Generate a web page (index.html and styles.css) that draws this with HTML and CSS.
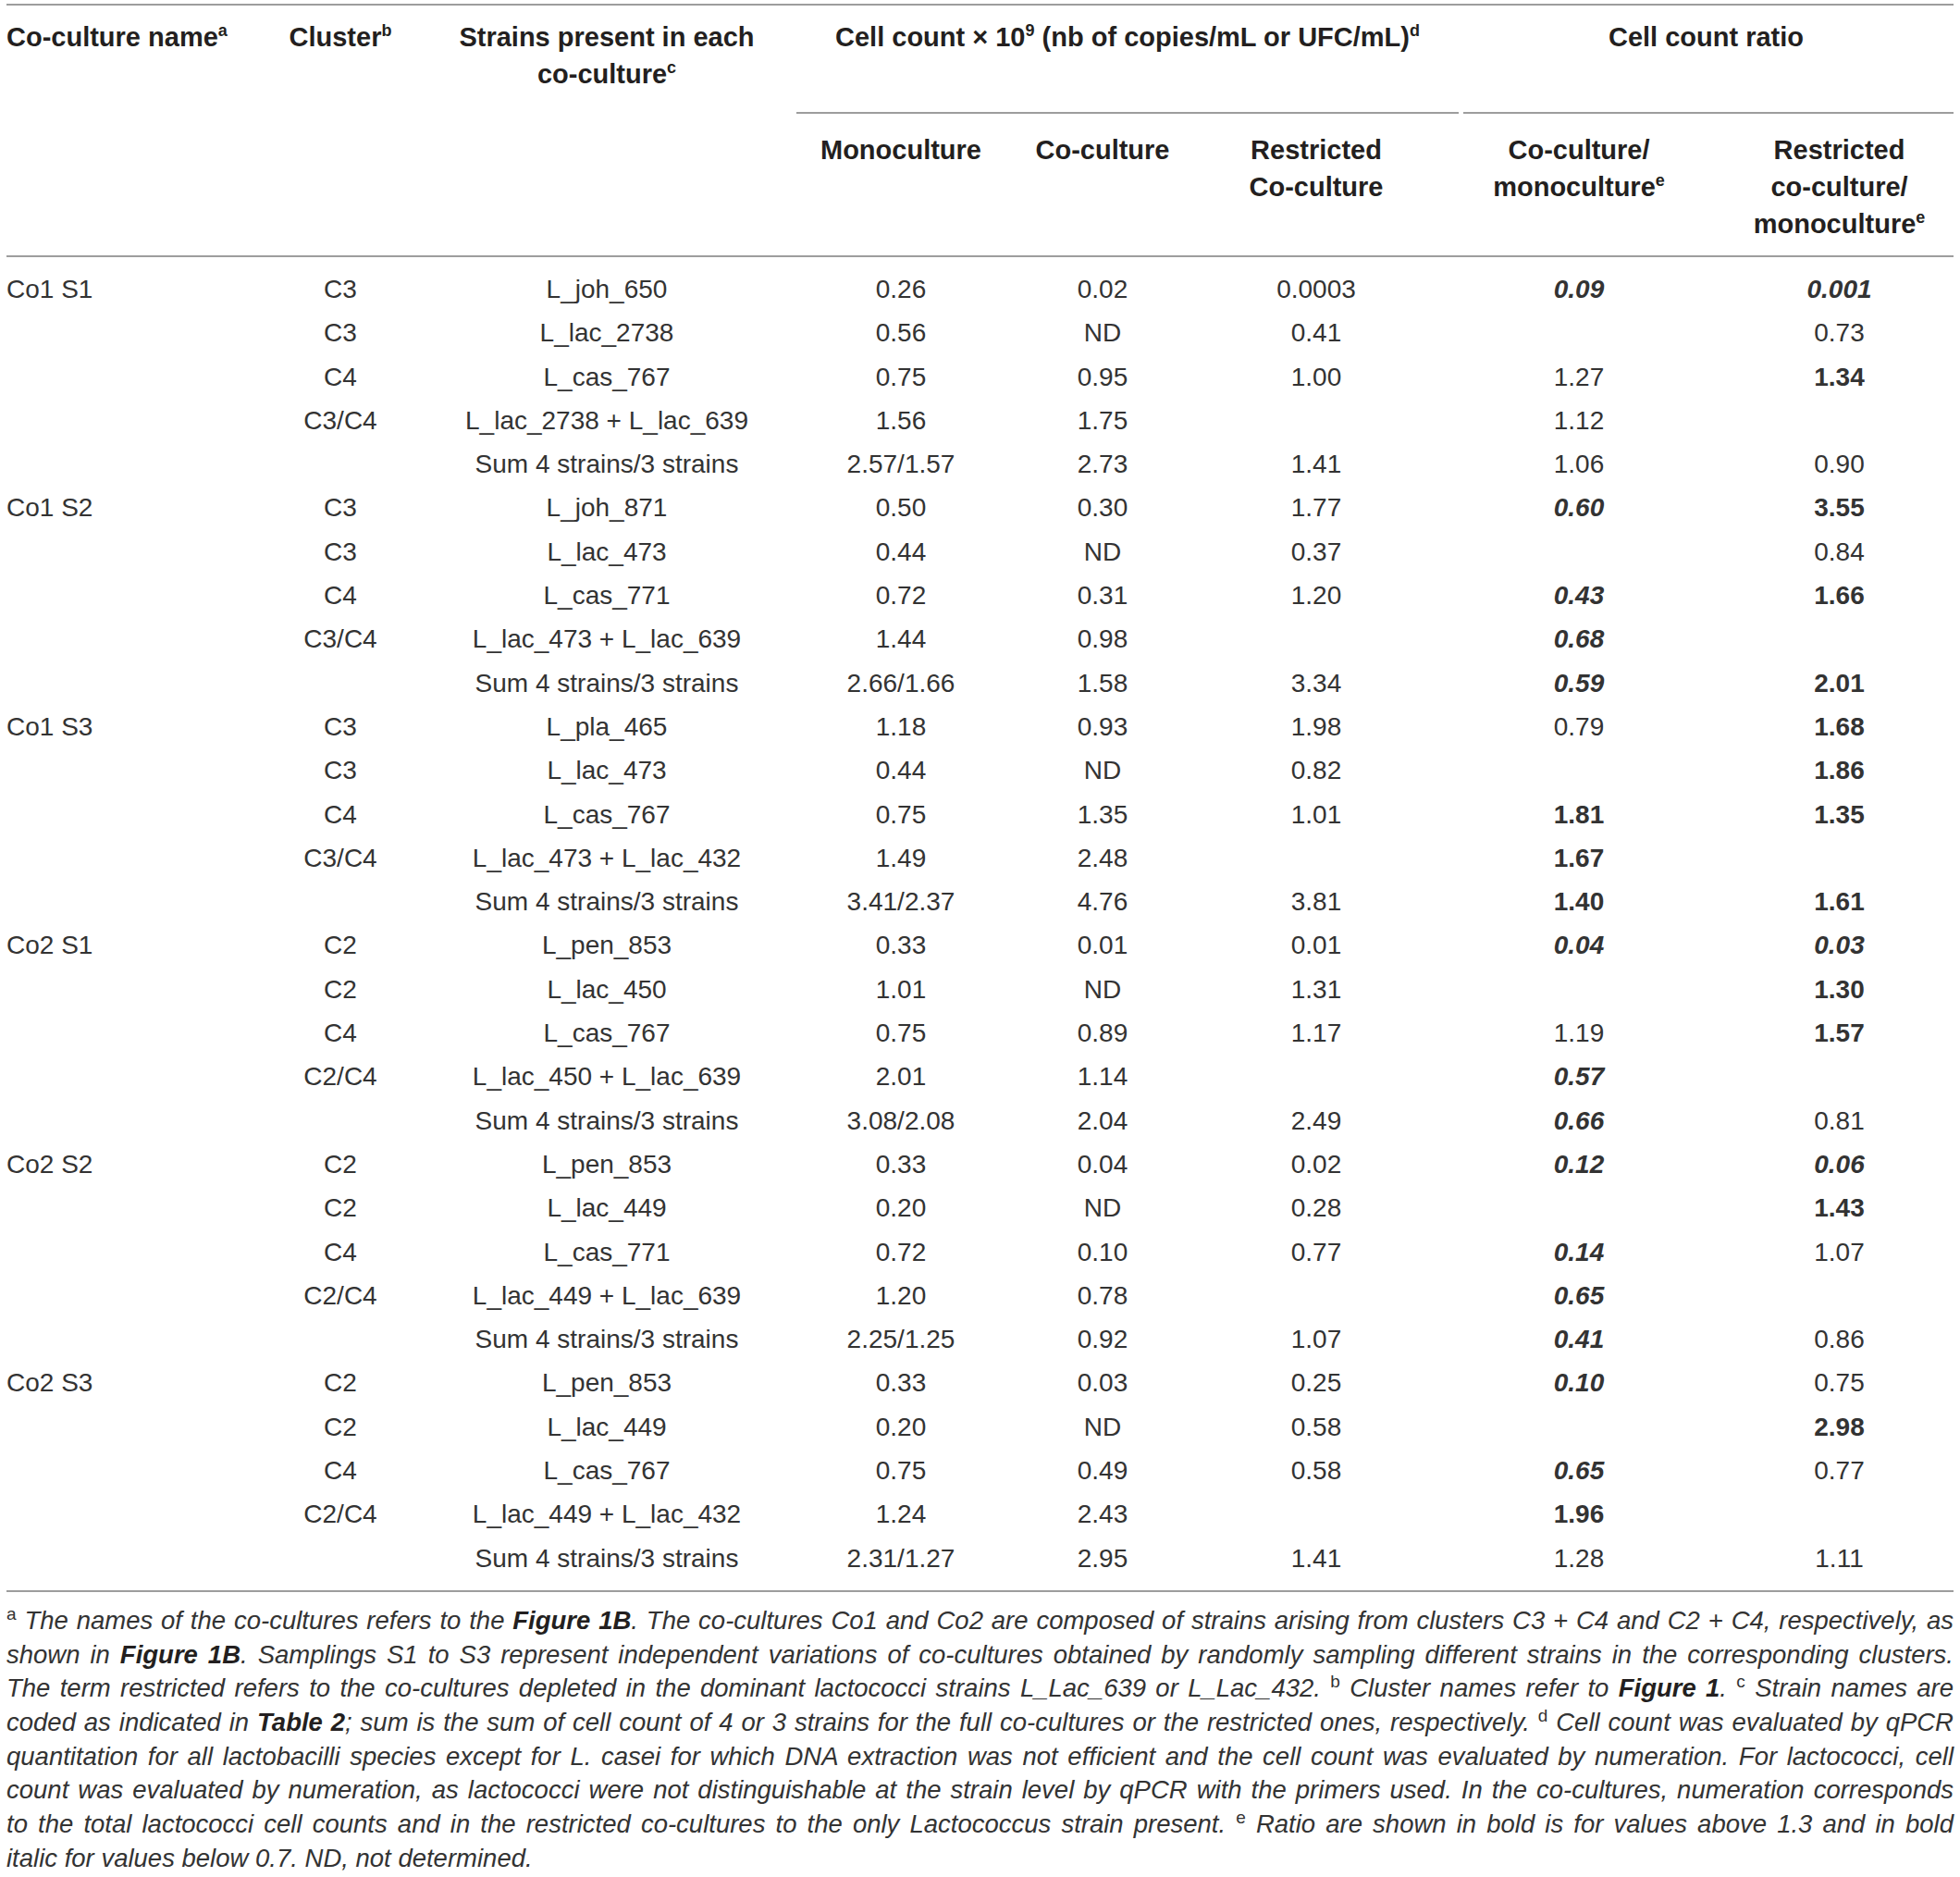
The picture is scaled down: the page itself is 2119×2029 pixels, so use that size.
FILE: index.html
```html
<!DOCTYPE html>
<html lang="en">
<head>
    <meta charset="UTF-8">
    <title>Cell counts of co-cultures</title>
    <link rel="stylesheet" href="styles.css">
</head>
<body>

<div class="page">
    <table class="data-table">
        <colgroup>
            <col class="c-name">
            <col class="c-cluster">
            <col class="c-strain">
            <col class="c-mono">
            <col class="c-co">
            <col class="c-restr">
            <col class="c-ratio">
            <col class="c-ratio-restr">
        </colgroup>
        <thead>
            <tr class="head-top">
                <th rowspan="2" class="left">Co-culture name<sup>a</sup></th>
                <th rowspan="2">Cluster<sup>b</sup></th>
                <th rowspan="2">Strains present in each co-culture<sup>c</sup></th>
                <th colspan="3" class="group group-rule">Cell count &times; 10<sup>9</sup> (nb of copies/mL or UFC/mL)<sup>d</sup></th>
                <th colspan="2" class="group group-rule inset">Cell count ratio</th>
            </tr>
            <tr class="head-sub">
                <th>Monoculture</th>
                <th>Co-culture</th>
                <th>Restricted<br>Co-culture</th>
                <th>Co-culture/<br>monoculture<sup>e</sup></th>
                <th>Restricted<br>co-culture/<br>monoculture<sup>e</sup></th>
            </tr>
        </thead>
        <tbody>
            <!-- Co1 S1 -->
            <tr><td>Co1 S1</td><td>C3</td><td>L_joh_650</td><td>0.26</td><td>0.02</td><td>0.0003</td><td class="bi">0.09</td><td class="bi">0.001</td></tr>
            <tr><td></td><td>C3</td><td>L_lac_2738</td><td>0.56</td><td>ND</td><td>0.41</td><td></td><td>0.73</td></tr>
            <tr><td></td><td>C4</td><td>L_cas_767</td><td>0.75</td><td>0.95</td><td>1.00</td><td>1.27</td><td class="b">1.34</td></tr>
            <tr><td></td><td>C3/C4</td><td>L_lac_2738 + L_lac_639</td><td>1.56</td><td>1.75</td><td></td><td>1.12</td><td></td></tr>
            <tr><td></td><td></td><td>Sum 4 strains/3 strains</td><td>2.57/1.57</td><td>2.73</td><td>1.41</td><td>1.06</td><td>0.90</td></tr>
            <!-- Co1 S2 -->
            <tr><td>Co1 S2</td><td>C3</td><td>L_joh_871</td><td>0.50</td><td>0.30</td><td>1.77</td><td class="bi">0.60</td><td class="b">3.55</td></tr>
            <tr><td></td><td>C3</td><td>L_lac_473</td><td>0.44</td><td>ND</td><td>0.37</td><td></td><td>0.84</td></tr>
            <tr><td></td><td>C4</td><td>L_cas_771</td><td>0.72</td><td>0.31</td><td>1.20</td><td class="bi">0.43</td><td class="b">1.66</td></tr>
            <tr><td></td><td>C3/C4</td><td>L_lac_473 + L_lac_639</td><td>1.44</td><td>0.98</td><td></td><td class="bi">0.68</td><td></td></tr>
            <tr><td></td><td></td><td>Sum 4 strains/3 strains</td><td>2.66/1.66</td><td>1.58</td><td>3.34</td><td class="bi">0.59</td><td class="b">2.01</td></tr>
            <!-- Co1 S3 -->
            <tr><td>Co1 S3</td><td>C3</td><td>L_pla_465</td><td>1.18</td><td>0.93</td><td>1.98</td><td>0.79</td><td class="b">1.68</td></tr>
            <tr><td></td><td>C3</td><td>L_lac_473</td><td>0.44</td><td>ND</td><td>0.82</td><td></td><td class="b">1.86</td></tr>
            <tr><td></td><td>C4</td><td>L_cas_767</td><td>0.75</td><td>1.35</td><td>1.01</td><td class="b">1.81</td><td class="b">1.35</td></tr>
            <tr><td></td><td>C3/C4</td><td>L_lac_473 + L_lac_432</td><td>1.49</td><td>2.48</td><td></td><td class="b">1.67</td><td></td></tr>
            <tr><td></td><td></td><td>Sum 4 strains/3 strains</td><td>3.41/2.37</td><td>4.76</td><td>3.81</td><td class="b">1.40</td><td class="b">1.61</td></tr>
            <!-- Co2 S1 -->
            <tr><td>Co2 S1</td><td>C2</td><td>L_pen_853</td><td>0.33</td><td>0.01</td><td>0.01</td><td class="bi">0.04</td><td class="bi">0.03</td></tr>
            <tr><td></td><td>C2</td><td>L_lac_450</td><td>1.01</td><td>ND</td><td>1.31</td><td></td><td class="b">1.30</td></tr>
            <tr><td></td><td>C4</td><td>L_cas_767</td><td>0.75</td><td>0.89</td><td>1.17</td><td>1.19</td><td class="b">1.57</td></tr>
            <tr><td></td><td>C2/C4</td><td>L_lac_450 + L_lac_639</td><td>2.01</td><td>1.14</td><td></td><td class="bi">0.57</td><td></td></tr>
            <tr><td></td><td></td><td>Sum 4 strains/3 strains</td><td>3.08/2.08</td><td>2.04</td><td>2.49</td><td class="bi">0.66</td><td>0.81</td></tr>
            <!-- Co2 S2 -->
            <tr><td>Co2 S2</td><td>C2</td><td>L_pen_853</td><td>0.33</td><td>0.04</td><td>0.02</td><td class="bi">0.12</td><td class="bi">0.06</td></tr>
            <tr><td></td><td>C2</td><td>L_lac_449</td><td>0.20</td><td>ND</td><td>0.28</td><td></td><td class="b">1.43</td></tr>
            <tr><td></td><td>C4</td><td>L_cas_771</td><td>0.72</td><td>0.10</td><td>0.77</td><td class="bi">0.14</td><td>1.07</td></tr>
            <tr><td></td><td>C2/C4</td><td>L_lac_449 + L_lac_639</td><td>1.20</td><td>0.78</td><td></td><td class="bi">0.65</td><td></td></tr>
            <tr><td></td><td></td><td>Sum 4 strains/3 strains</td><td>2.25/1.25</td><td>0.92</td><td>1.07</td><td class="bi">0.41</td><td>0.86</td></tr>
            <!-- Co2 S3 -->
            <tr><td>Co2 S3</td><td>C2</td><td>L_pen_853</td><td>0.33</td><td>0.03</td><td>0.25</td><td class="bi">0.10</td><td>0.75</td></tr>
            <tr><td></td><td>C2</td><td>L_lac_449</td><td>0.20</td><td>ND</td><td>0.58</td><td></td><td class="b">2.98</td></tr>
            <tr><td></td><td>C4</td><td>L_cas_767</td><td>0.75</td><td>0.49</td><td>0.58</td><td class="bi">0.65</td><td>0.77</td></tr>
            <tr><td></td><td>C2/C4</td><td>L_lac_449 + L_lac_432</td><td>1.24</td><td>2.43</td><td></td><td class="b">1.96</td><td></td></tr>
            <tr><td></td><td></td><td>Sum 4 strains/3 strains</td><td>2.31/1.27</td><td>2.95</td><td>1.41</td><td>1.28</td><td>1.11</td></tr>
        </tbody>
    </table>

    <!-- lines kept as in the printed table, each one justified -->
    <p class="notes">
        <span class="line"><sup>a</sup> The names of the co-cultures refers to the <b>Figure 1B</b>. The co-cultures Co1 and Co2 are composed of strains arising from clusters C3 + C4 and C2 + C4, respectively, as</span>
        <span class="line">shown in <b>Figure 1B</b>. Samplings S1 to S3 represent independent variations of co-cultures obtained by randomly sampling different strains in the corresponding clusters.</span>
        <span class="line">The term restricted refers to the co-cultures depleted in the dominant lactococci strains L_Lac_639 or L_Lac_432. <sup>b</sup> Cluster names refer to <b>Figure 1</b>. <sup>c</sup> Strain names are</span>
        <span class="line">coded as indicated in <b>Table 2</b>; sum is the sum of cell count of 4 or 3 strains for the full co-cultures or the restricted ones, respectively. <sup>d</sup> Cell count was evaluated by qPCR</span>
        <span class="line">quantitation for all lactobacilli species except for L. casei for which DNA extraction was not efficient and the cell count was evaluated by numeration. For lactococci, cell</span>
        <span class="line">count was evaluated by numeration, as lactococci were not distinguishable at the strain level by qPCR with the primers used. In the co-cultures, numeration corresponds</span>
        <span class="line">to the total lactococci cell counts and in the restricted co-cultures to the only Lactococcus strain present. <sup>e</sup> Ratio are shown in bold is for values above 1.3 and in bold</span>
        <span class="line">italic for values below 0.7. ND, not determined.</span>
    </p>
</div>

</body>
</html>
```

FILE: styles.css
```css
body {
    margin: 0;
    font-family: 'Liberation Sans', Arial, sans-serif;
    color: #231f20;
    background-color: white;
}

.page {
    padding: 4px 7px 0;
    width: 2105px;
}

.data-table {
    width: 2105px;
    table-layout: fixed;
    border-collapse: collapse;
    border-top: 2px solid #9d9d9d;
    border-bottom: 2px solid #9d9d9d;
}

.c-name { width: 278px; }
.c-cluster { width: 194px; }
.c-strain { width: 382px; }
.c-mono { width: 254px; }
.c-co { width: 182px; }
.c-restr { width: 280px; }
.c-ratio { width: 288px; }
.c-ratio-restr { width: 247px; }

.data-table thead {
    border-bottom: 2px solid #9d9d9d;
}

.data-table th {
    font-size: 29px;
    font-weight: bold;
    line-height: 40px;
    text-align: center;
    vertical-align: top;
    padding: 0 28px 0 0;
}

.data-table th.left {
    text-align: left;
    padding-right: 0;
}

.head-top th {
    padding-top: 14px;
}

.head-top th.group {
    padding: 14px 0 63px;
}

/* rule under the grouped headings, the second one starts a bit further right */
.group-rule {
    background: linear-gradient(#9d9d9d, #9d9d9d) left bottom / 100% 2px no-repeat;
}

.group-rule.inset {
    background-position: right bottom;
    background-size: calc(100% - 5px) 2px;
}

.head-sub th {
    padding-top: 19px;
    padding-bottom: 14px;
}

.head-sub th:last-child {
    padding-right: 0;
}

.data-table td {
    font-size: 28px;
    line-height: 47.3px;
    color: #333;
    text-align: center;
    padding: 0 28px 0 0;
    white-space: nowrap;
}

.data-table td:first-child {
    text-align: left;
    padding-right: 0;
}

.data-table td:last-child {
    padding-right: 0;
}

.data-table tbody tr:first-child td {
    padding-top: 11px;
}

.data-table tbody tr:last-child td {
    padding-bottom: 11px;
}

.b {
    font-weight: bold;
    color: #231f20;
}

.bi {
    font-weight: bold;
    font-style: italic;
    color: #231f20;
}

sup {
    font-size: 18px;
    line-height: 0;
}

.notes {
    margin: 13px 0 0;
    font-size: 27.5px;
    line-height: 36.7px;
    font-style: italic;
    color: #333;
}

.notes .line {
    display: block;
    text-align: justify;
    text-align-last: justify;
}

.notes .line:last-child {
    text-align-last: left;
}

.notes sup {
    font-style: normal;
    font-size: 19px;
}

.notes b {
    color: #231f20;
}
```
